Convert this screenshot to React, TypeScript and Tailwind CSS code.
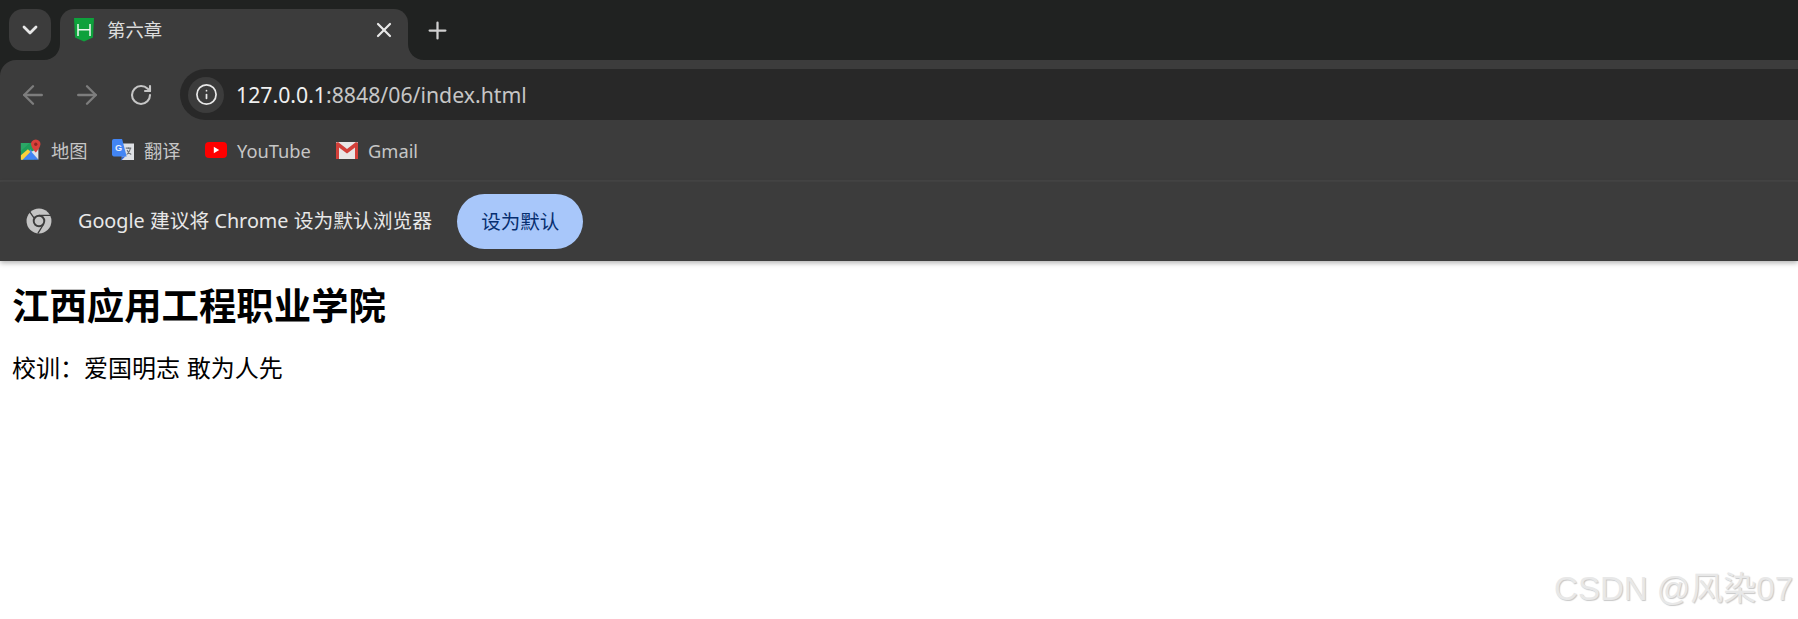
import { ArrowLeft, ArrowRight, ChevronDown, Info, Plus, RotateCw, X } from "lucide-react";
import type { ReactNode } from "react";

const uiFont = "font-['Noto_Sans','Noto_Sans_CJK_SC',sans-serif]";

function HBuilderIcon() {
  return (
    <svg width="20" height="24" viewBox="0 0 20 24" className="shrink-0">
      <path d="M0 0H20L19 19.5L10 23.5L1 19.5Z" fill="#0ea13c" />
      <path d="M4 6V18M16 6V18M4 11.8H16" stroke="#eef7ef" strokeWidth="1.5" fill="none" />
    </svg>
  );
}

function MapsIcon() {
  return (
    <svg width="21" height="22" viewBox="0 0 24 24" className="shrink-0">
      <path d="M1 4H16V23H1Z" fill="#1e9e5a" />
      <path d="M1 23L12 11L21 23Z" fill="#4285f4" />
      <path d="M1 18L9 11L12 14L3 23H1Z" fill="#fbd13b" />
      <path d="M1 4H11L1 13Z" fill="#2ba866" />
      <path d="M13 14L21 23V10Z" fill="#dfe3e8" />
      <path d="M18 0C14.6 0 12.6 2.5 12.6 5.2C12.6 9 18 15 18 15C18 15 23.4 9 23.4 5.2C23.4 2.5 21.4 0 18 0Z" fill="#d9403a" />
      <circle cx="18" cy="5.4" r="1.9" fill="#8f2622" />
    </svg>
  );
}

function TranslateIcon() {
  return (
    <svg width="22" height="24" viewBox="0 0 24 24" className="shrink-0">
      <path d="M9 5H24V23H11Z" fill="#dfe1e5" />
      <path d="M15 10H21M18 9V11M16 17C18 15.5 19.5 13 20 10.5M16.5 12C17 14 19 16 21 17" stroke="#6f7378" strokeWidth="1.2" fill="none" />
      <path d="M2 0H11L16 19H2C1 19 0 18 0 17V2C0 1 1 0 2 0Z" fill="#4285f4" />
      <path d="M11 19L9.5 24L14.5 19Z" fill="#3367d6" />
      <text x="3.3" y="13" fontSize="10" fontWeight="700" fill="#e8f0fe" fontFamily="'Liberation Sans',sans-serif">G</text>
    </svg>
  );
}

function YouTubeIcon() {
  return (
    <svg width="22" height="16" viewBox="0 0 22 16" className="shrink-0">
      <rect x="0" y="0" width="22" height="16" rx="4" fill="#fe0000" />
      <path d="M8.8 4.8L14.2 8L8.8 11.2Z" fill="#ffffff" />
    </svg>
  );
}

function GmailIcon() {
  return (
    <svg width="22" height="17" viewBox="0 0 22 17" className="shrink-0">
      <rect x="0" y="0" width="22" height="17" rx="1" fill="#e8e6e6" />
      <path d="M0 1V17H3V5.5L11 11.5L19 5.5V17H22V1L20 0L11 7L2 0Z" fill="#d2403a" />
    </svg>
  );
}

function ChromeIcon() {
  return (
    <svg width="26" height="26" viewBox="0 0 48 48" className="shrink-0">
      <circle cx="24" cy="24" r="23" fill="#c4c4c4" />
      <path d="M24 13.5H46M15 18.5L4 3M33 29L22 47" stroke="#3c3c3c" strokeWidth="2.4" fill="none" />
      <circle cx="24" cy="24" r="11.5" fill="#3c3c3c" />
      <circle cx="24" cy="24" r="8" fill="#c4c4c4" />
    </svg>
  );
}

function Bookmark({ icon, label, className }: { icon: ReactNode; label: string; className: string }) {
  return (
    <div className={`flex items-center gap-[10px] ${className}`}>
      {icon}
      <span className="pt-[2px] text-[18.3px] leading-6 text-[#c6c6c6]">{label}</span>
    </div>
  );
}

function TabFlare({ side }: { side: "left" | "right" }) {
  return (
    <svg
      width="16"
      height="16"
      viewBox="0 0 16 16"
      className={`absolute bottom-0 ${side === "left" ? "-left-4" : "-right-4 -scale-x-100"}`}
    >
      <path d="M16 0V16H0C9 16 16 9 16 0Z" fill="#3c3c3c" />
    </svg>
  );
}

export default function App() {
  return (
    <div className={`relative h-screen overflow-hidden bg-white ${uiFont}`}>
      <div className="bg-[#202221]">
        <div className="flex h-[60px] items-start pl-[9px] pt-[9px]">
          <button className="grid h-[42px] w-[42px] place-items-center rounded-[14px] bg-[#3c3c3c] text-[#e6e6e6]">
            <ChevronDown size={24} strokeWidth={2.8} />
          </button>
          <div className="relative ml-[9px] flex h-[51px] w-[348px] items-center rounded-t-[14px] bg-[#3c3c3c] pb-[9px] pl-[14px] pr-[12px]">
            <TabFlare side="left" />
            <HBuilderIcon />
            <span className="ml-[13px] flex-1 text-[18.4px] leading-6 text-[#dcdcdc]">第六章</span>
            <X size={24} strokeWidth={2.2} className="text-[#e8e8e8]" />
            <TabFlare side="right" />
          </div>
          <Plus size={27} strokeWidth={2} className="ml-[16px] mt-[8px] text-[#d0d0d0]" />
        </div>

        <div className="rounded-tl-[16px] bg-[#3c3c3c]">
          <div className="flex h-[60px] items-start pt-[9px]">
            <div className="flex h-[51px] w-[180px] items-center pl-[18px]">
              <ArrowLeft size={30} strokeWidth={1.9} className="text-[#7d7d7d]" />
              <ArrowRight size={30} strokeWidth={1.9} className="ml-[24px] text-[#7d7d7d]" />
              <RotateCw size={24} strokeWidth={2.1} className="ml-[27px] text-[#c6c6c6]" />
            </div>
            <div className="flex h-[51px] flex-1 items-center rounded-l-[26px] bg-[#282828] pl-[8px]">
              <div className="grid h-[36px] w-[36px] place-items-center rounded-full bg-[#3c3c3c] text-[#e8e8e8]">
                <Info size={23} strokeWidth={1.8} />
              </div>
              <span className="ml-[12px] text-[21.25px] leading-7 text-[#c6c6c6]">
                <span className="text-[#f0f0f0]">127.0.0.1</span>:8848/06/index.html
              </span>
            </div>
          </div>

          <div className="flex h-[60px] items-center pl-[20px]">
            <Bookmark icon={<MapsIcon />} label="地图" className="w-[92px]" />
            <Bookmark icon={<TranslateIcon />} label="翻译" className="w-[93px]" />
            <Bookmark icon={<YouTubeIcon />} label="YouTube" className="w-[131px]" />
            <Bookmark icon={<GmailIcon />} label="Gmail" className="w-[90px]" />
          </div>

          <div className="h-[2px] bg-[#454545]" />

          <div className="flex h-[79px] items-center pb-[1px] pl-[26px] shadow-[0_2px_5px_rgba(0,0,0,0.3)]">
            <ChromeIcon />
            <span className="ml-[26px] text-[19.8px] leading-7 text-[#e8e8e8]">Google 建议将 Chrome 设为默认浏览器</span>
            <button className="ml-[25px] h-[55px] w-[126px] rounded-full bg-[#a8c7fa] pt-[2px] text-[19.5px] text-[#062e6f]">设为默认</button>
          </div>
        </div>
      </div>

      <main className="px-[12px] font-['Liberation_Sans','Noto_Sans_CJK_SC',sans-serif] text-black">
        <h1 className="mt-[22px] text-[37.4px] font-bold leading-[48px]">江西应用工程职业学院</h1>
        <p className="mt-[22px] text-[24px] leading-8">校训：爱国明志 敢为人先</p>
      </main>

      <div className="absolute bottom-[10px] right-[5px] font-['Liberation_Sans','Noto_Sans_CJK_SC',sans-serif] text-[33px] leading-10 text-[#e8e8e8] [text-shadow:1px_1px_1px_#c8c8c8]">
        CSDN @风染07
      </div>
    </div>
  );
}
